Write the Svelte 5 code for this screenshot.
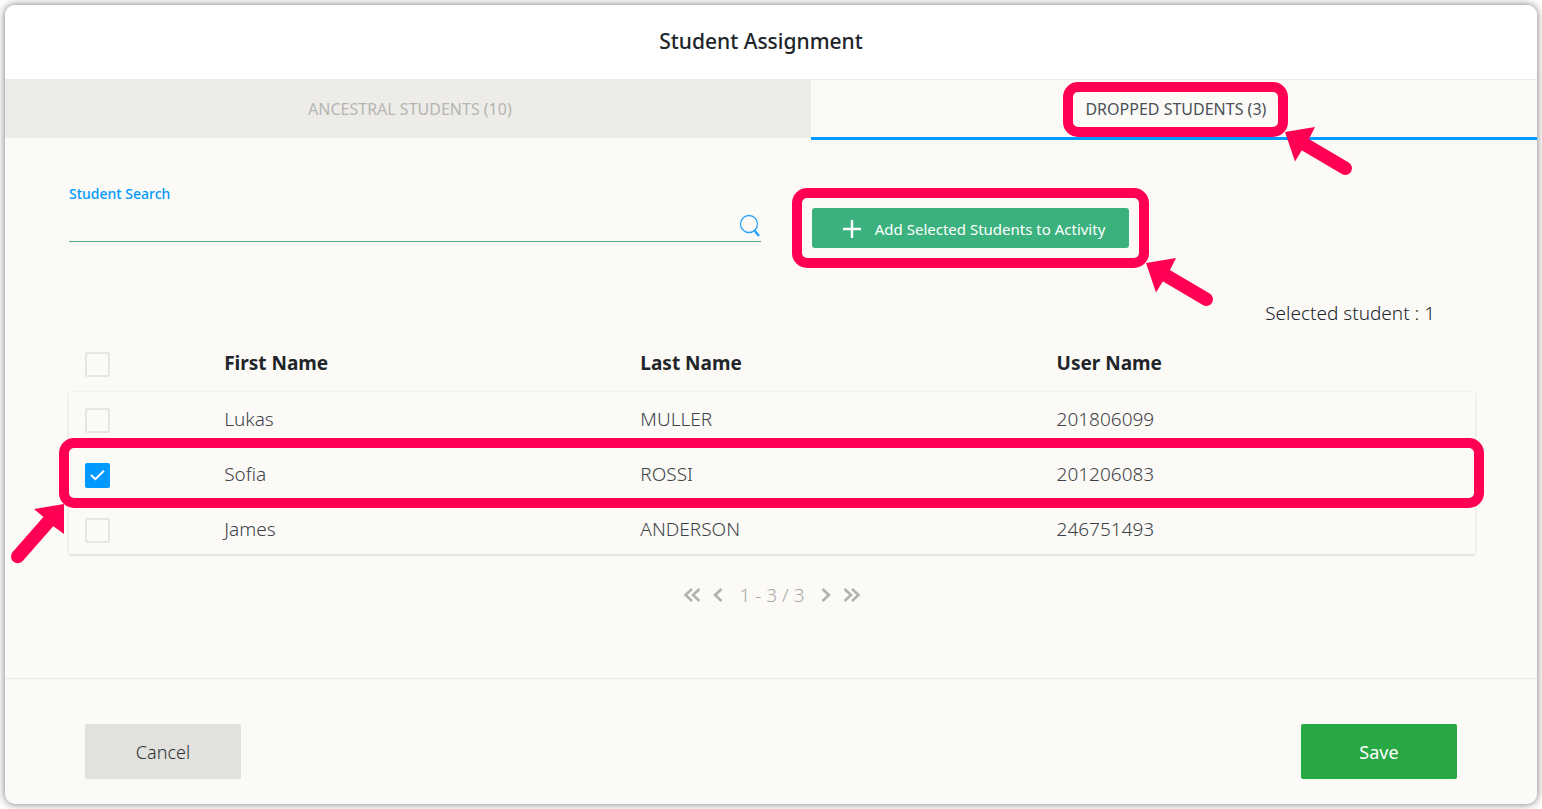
<script lang="ts">
  type Student = { id: number; firstName: string; lastName: string; userName: string; selected: boolean };

  let students = $state<Student[]>([
    { id: 1, firstName: "Lukas", lastName: "MULLER", userName: "201806099", selected: false },
    { id: 2, firstName: "Sofia", lastName: "ROSSI", userName: "201206083", selected: true },
    { id: 3, firstName: "James", lastName: "ANDERSON", userName: "246751493", selected: false },
  ]);
  let search = $state("");
  let activeTab = $state("dropped");

  const highlightedId = 2;

  let selectedCount = $derived(students.filter((s) => s.selected).length);
  let allSelected = $derived(selectedCount === students.length);

  const toggleAll = () => {
    const next = !allSelected;
    students.forEach((s) => (s.selected = next));
  };
</script>

{#snippet callout(side: string)}
  <span class="callout" aria-hidden="true">
    {#if side === "left"}
      <svg class="arrow arrow-left" width="54" height="60" viewBox="0 0 54 60">
        <path d="M53 0 23 5 33 13.500 42 22 53 30Z" />
        <path class="shaft" d="M37 18 6.700 52.500" />
      </svg>
    {:else}
      <svg class="arrow arrow-right" width="68" height="49" viewBox="0 0 68 49">
        <path d="M0 5 30 0 24 12 17 23 10 34.500Z" />
        <path class="shaft" d="M20 17.500 60.300 41.300" />
      </svg>
    {/if}
  </span>
{/snippet}

<div class="modal" role="dialog" aria-labelledby="modal-title">
  <header class="modal-header">
    <h1 id="modal-title">Student Assignment</h1>
  </header>

  <div class="tabs" role="tablist">
    <button
      class="tab tab-wide"
      class:active={activeTab === "ancestral"}
      type="button"
      role="tab"
      aria-selected={activeTab === "ancestral"}
      onclick={() => (activeTab = "ancestral")}
    >
      <span class="tab-label">ANCESTRAL STUDENTS (10)</span>
    </button>
    <button
      class="tab"
      class:active={activeTab === "dropped"}
      type="button"
      role="tab"
      aria-selected={activeTab === "dropped"}
      onclick={() => (activeTab = "dropped")}
    >
      <span class="tab-label">DROPPED STUDENTS (3){@render callout("right")}</span>
    </button>
  </div>

  <main class="content">
    <div class="toolbar">
      <div class="search">
        <label for="student-search">Student Search</label>
        <div class="search-field">
          <input id="student-search" type="text" bind:value={search} />
          <svg width="22" height="24" viewBox="0 0 22 24" fill="none" stroke="#2ba3fb">
            <circle cx="10" cy="10" r="8.500" stroke-width="1.300" />
            <path d="M15 16l5 6" stroke-width="2.600" />
          </svg>
        </div>
      </div>

      <div class="add-wrap">
        <button class="add" type="button">
          <svg width="18" height="18" viewBox="0 0 18 18" stroke="#fff" stroke-width="2.400">
            <path d="M9 0v18M0 9h18" />
          </svg>
          Add Selected Students to Activity
        </button>
        {@render callout("right")}
      </div>
    </div>

    <p class="selected">Selected student : {selectedCount}</p>

    <table>
      <colgroup>
        <col class="col-check" />
        <col class="col-name" />
        <col class="col-name" />
        <col />
      </colgroup>
      <thead>
        <tr>
          <th><input type="checkbox" aria-label="Select all" checked={allSelected} onchange={toggleAll} /></th>
          <th>First Name</th>
          <th>Last Name</th>
          <th>User Name</th>
        </tr>
      </thead>
      <tbody>
        {#each students as student (student.id)}
          <tr>
            <td>
              <input type="checkbox" aria-label="Select {student.firstName}" bind:checked={student.selected} />
              {#if student.id === highlightedId}{@render callout("left")}{/if}
            </td>
            <td>{student.firstName}</td>
            <td>{student.lastName}</td>
            <td>{student.userName}</td>
          </tr>
        {/each}
      </tbody>
    </table>

    <nav class="pager" aria-label="Pagination">
      <button type="button" aria-label="First page">
        <svg width="18" height="14" viewBox="0 0 18 14"><path d="M9 1 2.500 7 9 13M16.500 1 10 7l6.500 6" /></svg>
      </button>
      <button type="button" aria-label="Previous page">
        <svg width="10" height="14" viewBox="0 0 10 14"><path d="M8.500 1 2 7l6.500 6" /></svg>
      </button>
      <span>1 - 3 / 3</span>
      <button type="button" aria-label="Next page">
        <svg width="10" height="14" viewBox="0 0 10 14"><path d="M1.500 1 8 7l-6.500 6" /></svg>
      </button>
      <button type="button" aria-label="Last page">
        <svg width="18" height="14" viewBox="0 0 18 14"><path d="M1.500 1 8 7l-6.500 6M9 1l6.500 6L9 13" /></svg>
      </button>
    </nav>
  </main>

  <footer class="modal-footer">
    <button class="action cancel" type="button">Cancel</button>
    <button class="action save" type="button">Save</button>
  </footer>
</div>

<style>
  :global(body) {
    background: #fff;
    overflow-x: hidden;
  }

  .modal {
    margin: 5px;
    border-radius: 10px;
    background: #fbfaf6;
    box-shadow: 0 0 8px rgba(0, 0, 0, 0.55);
    color: #212529;
    font-family: "Segoe UI", "Noto Sans", sans-serif;
    font-size: 19px;
  }

  button,
  input {
    font-family: inherit;
  }

  button {
    border: none;
    cursor: pointer;
  }

  .modal-header {
    display: flex;
    align-items: center;
    justify-content: center;
    height: 72px;
    padding: 0 20px 2px 0;
    border-bottom: 1px solid #e9ebeb;
    border-radius: 10px 10px 0 0;
    background: #fff;
  }

  h1 {
    margin: 0;
    font-size: 21px;
    font-weight: 500;
    line-height: 30px;
  }

  .tabs {
    display: flex;
    align-items: flex-start;
    height: 60px;
  }

  .tab {
    flex: 1;
    height: 58px;
    padding: 0 0 0 4px;
    background: #edece8;
    color: #b5b5b1;
    font-size: 16px;
  }

  .tab-wide {
    flex: 0 0 52.6%;
  }

  .tab.active {
    height: 60px;
    border-bottom: 3px solid #0099ff;
    border-radius: 5px 5px 0 0;
    background: #fbfaf6;
    color: #495057;
  }

  .tab-label {
    position: relative;
    display: inline-block;
    line-height: 20px;
  }

  .content {
    padding: 44px 62px 68px 64px;
  }

  .toolbar {
    display: flex;
    align-items: flex-start;
    gap: 51px;
  }

  .search {
    flex: 0 0 49.2%;
  }

  .search label {
    display: block;
    color: #0099ff;
    font-size: 14px;
    font-weight: 500;
    line-height: 20px;
  }

  .search-field {
    display: flex;
    align-items: center;
    height: 37px;
    border-bottom: 1px solid #4caa86;
  }

  .search-field input {
    flex: 1;
    border: none;
    outline: none;
    background: transparent;
    font-size: 19px;
  }

  .search-field svg {
    margin-top: 6px;
  }

  .add-wrap {
    position: relative;
    margin-top: 24px;
  }

  .add {
    display: flex;
    align-items: center;
    gap: 14px;
    height: 40px;
    padding: 2px 24px 0 31px;
    border-radius: 3px;
    background: #3bb27d;
    color: #fff;
    font-size: 15px;
    white-space: nowrap;
  }

  .selected {
    margin: 50px 40px 8px 0;
    font-weight: 300;
    line-height: 30px;
    text-align: right;
  }

  table {
    width: 100%;
    table-layout: fixed;
    border-collapse: separate;
    border-spacing: 0;
  }

  .col-check {
    width: 9.9%;
  }

  .col-name {
    width: 29.6%;
  }

  th,
  td {
    box-sizing: border-box;
    height: 55px;
    padding: 12px 16px 0;
    line-height: 30px;
    text-align: left;
    vertical-align: top;
  }

  th {
    height: 56px;
  }

  td {
    color: #3d4248;
    font-weight: 300;
  }

  tr:last-child td {
    height: 52px;
  }

  tbody {
    box-shadow: 0 1px 3px rgba(0, 0, 0, 0.16);
  }

  tbody tr {
    position: relative;
  }

  input[type="checkbox"] {
    display: block;
    appearance: none;
    width: 25px;
    height: 25px;
    margin: 4px 0 0;
    border: 2px solid #e7e6e2;
    border-radius: 2px;
  }

  input[type="checkbox"]:checked {
    border-color: #0099ff;
    background: #0099ff
      url("data:image/svg+xml,%3Csvg xmlns='http://www.w3.org/2000/svg' viewBox='0 0 21 21'%3E%3Cpath d='M4 10l4.300 4.200L17 5.800' fill='none' stroke='white' stroke-width='2'/%3E%3C/svg%3E")
      center / 21px 21px no-repeat;
  }

  .pager {
    display: flex;
    align-items: center;
    justify-content: center;
    gap: 12px;
    margin-top: 26px;
    color: #a9a8a5;
    font-weight: 300;
    line-height: 30px;
  }

  .pager button {
    display: flex;
    padding: 0;
    background: transparent;
  }

  .pager span {
    margin: 0 4px;
  }

  .pager path {
    fill: none;
    stroke: #b3b2af;
    stroke-width: 2.6;
  }

  .modal-footer {
    display: flex;
    justify-content: space-between;
    padding: 45px 80px 25px;
    border-top: 1px solid #e7ebec;
  }

  .action {
    width: 156px;
    height: 55px;
    border-radius: 2px;
    font-size: 18px;
  }

  .cancel {
    background: #e2e1dd;
    color: #2d3136;
    font-weight: 300;
  }

  .save {
    background: #28a745;
    color: #fff;
  }

  /* tutorial highlight: ring with an arrow at one of its lower corners */
  .callout {
    position: absolute;
    inset: -20px;
    border: 10px solid #ff0054;
    border-radius: 15px;
    pointer-events: none;
    z-index: 2;
  }

  .tab-label .callout {
    inset: -17px -22px -18px;
  }

  td .callout {
    inset: -9px -9px -6px -10px;
  }

  .arrow {
    position: absolute;
    overflow: visible;
    fill: #ff0054;
  }

  .arrow-right {
    top: 100%;
    left: calc(100% + 7px);
  }

  .arrow-left {
    top: calc(100% + 6px);
    right: calc(100% + 4px);
  }

  .shaft {
    stroke: #ff0054;
    stroke-width: 13.4;
    stroke-linecap: round;
  }
</style>
